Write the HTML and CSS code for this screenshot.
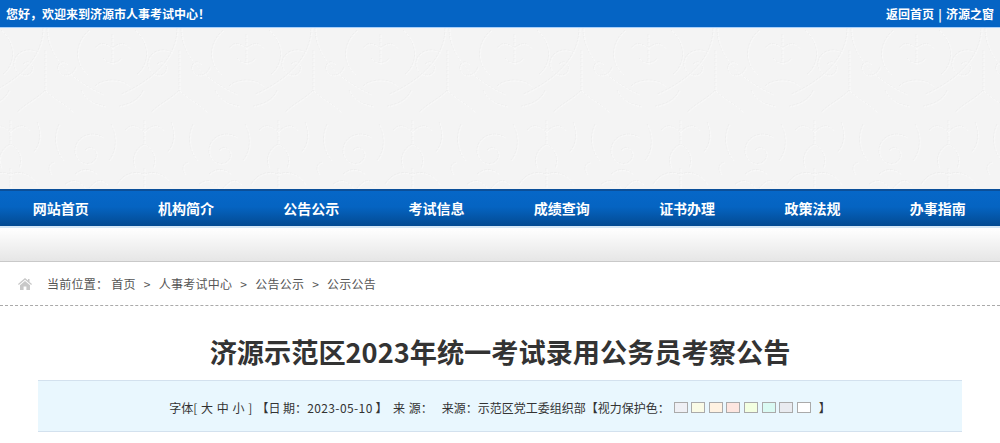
FILE: index.html
```html
<!DOCTYPE html>
<html lang="zh-CN">
<head>
    <meta charset="UTF-8">
    <meta name="viewport" content="width=device-width, initial-scale=1.0">
    <title>济源示范区2023年统一考试录用公务员考察公告</title>
    <link rel="stylesheet" href="styles.css">
</head>
<body>
    <div class="topbar">
        <div class="welcome">您好，欢迎来到济源市人事考试中心！</div>
        <div class="top-links"><a href="#">返回首页</a> | <a href="#">济源之窗</a></div>
    </div>

    <div class="banner">
        <svg class="banner-texture" width="100%" height="100%" aria-hidden="true">
            <defs>
                <g id="damask-lines" fill="none" stroke-width="1" stroke-dasharray="3 1">
                    <!-- upper row: tall arcs meeting at the seam -->
                    <path d="M2 0C2 26 22 50 58 66M132 0C132 26 112 50 76 66"/>
                    <path d="M134 22V62M0 22V62M134 62C124 72 116 74 106 84M0 62C10 72 18 74 28 84"/>
                    <path d="M44 2C30 14 28 34 42 46M90 2C104 14 106 34 92 46"/>
                    <path d="M67 6V36M67 20C60 14 54 14 50 20M67 20C74 14 80 14 84 20M58 30C62 36 72 36 76 30"/>
                    <path d="M112 36c4-5 11-1 9 6c-3 8-16 6-18-4c-2-13 12-20 24-14"/>
                    <path d="M22 36c-4-5-11-1-9 6c3 8 16 6 18-4"/>
                    <path d="M50 58C56 50 78 50 84 58M36 62C40 72 50 76 60 78M98 62C94 72 84 76 74 78"/>
                    <!-- lower row: small repeated damask -->
                    <path d="M99 92V116M99 104C92 96 84 96 80 102M99 104C106 96 114 96 118 102"/>
                    <path d="M99 116C90 120 86 130 90 140M99 116C108 120 112 130 108 140M99 140V160"/>
                    <path d="M99 146C88 142 78 146 72 156M99 146C110 142 120 146 126 156"/>
                    <path d="M40 122c5-6 13-1 11 7c-3 10-19 8-21-4c-2-15 14-24 28-16"/>
                    <path d="M14 96C8 108 10 122 18 132M66 96C72 108 72 122 64 132"/>
                    <path d="M30 146C36 140 46 140 52 146M20 156C28 150 34 152 40 160M62 156C56 150 50 152 44 160"/>
                    <path d="M126 94C130 104 130 116 122 124M6 146C2 140 4 134 10 134"/>
                </g>
                <pattern id="damask" width="134" height="162" patternUnits="userSpaceOnUse" patternTransform="translate(45 0)">
                    <use href="#damask-lines" stroke="#eeeeee"/>
                    <use href="#damask-lines" stroke="#f9f9f9" x="1" y="1"/>
                </pattern>
            </defs>
            <rect width="100%" height="100%" fill="url(#damask)"/>
        </svg>
    </div>

    <nav class="nav">
        <a href="#" class="nav-link">网站首页</a>
        <a href="#" class="nav-link">机构简介</a>
        <a href="#" class="nav-link">公告公示</a>
        <a href="#" class="nav-link">考试信息</a>
        <a href="#" class="nav-link">成绩查询</a>
        <a href="#" class="nav-link">证书办理</a>
        <a href="#" class="nav-link">政策法规</a>
        <a href="#" class="nav-link">办事指南</a>
    </nav>
    <div class="subnav"></div>

    <div class="crumbs">
        <svg class="home-icon" width="14" height="12" viewBox="0 0 14 12" aria-hidden="true">
            <path d="M7 0L0 6l.8 1L7 1.8 13.2 7l.8-1L11.5 3.900V1H10v1.600Z"/>
            <path d="M7 3L2 7.200V12h3.600V8.500h2.800V12H12V7.200Z"/>
        </svg>
        <span class="crumb-label">当前位置：</span>
        <a href="#">首页</a>
        <span class="crumb-sep">&gt;</span>
        <a href="#">人事考试中心</a>
        <span class="crumb-sep">&gt;</span>
        <a href="#">公告公示</a>
        <span class="crumb-sep">&gt;</span>
        <a href="#">公示公告</a>
    </div>

    <main class="article">
        <h1>济源示范区2023年统一考试录用公务员考察公告</h1>
        <div class="meta">
            <span class="meta-font">字体[ 大 中 小 ]</span>
            <span class="meta-date">【日 期：<span class="meta-num">2023-05-10</span> 】</span>
            <span class="meta-source">来 源：</span>
            <span class="meta-origin">来源：示范区党工委组织部</span>
            <span class="meta-eye">【视力保护色：</span>
            <span class="swatches">
                <i class="swatch c1"></i>
                <i class="swatch c2"></i>
                <i class="swatch c3"></i>
                <i class="swatch c4"></i>
                <i class="swatch c5"></i>
                <i class="swatch c6"></i>
                <i class="swatch c7"></i>
                <i class="swatch c8"></i>
            </span>
            <span>】</span>
        </div>
    </main>
</body>
</html>
```

FILE: styles.css
```css
* {
    margin: 0;
    padding: 0;
    box-sizing: border-box;
}

body {
    font-family: "Noto Sans CJK SC", "Liberation Sans", sans-serif;
    font-size: 12px;
    color: #555;
    background: #fff;
    overflow: hidden;
}

a {
    color: inherit;
    text-decoration: none;
}

.topbar {
    height: 27px;
    padding: 0 6px;
    display: flex;
    justify-content: space-between;
    align-items: center;
    background: #0564c4;
    color: #fff;
    font-weight: 700;
    line-height: 27px;
}

.top-links {
    word-spacing: 1.5px;
}

.banner {
    height: 162px;
    border-top: 1px solid #a9d0fb;
    background: #f4f4f4;
}

.banner-texture {
    display: block;
}

.nav {
    height: 37px;
    display: grid;
    grid-template-columns: repeat(8, 125.3px);
    border-top: 2px solid #0b4f99;
    background: linear-gradient(#0667c8 0%, #0564c2 45%, #034a92 100%);
}

.nav-link {
    padding-right: 4px;
    text-align: center;
    color: #fff;
    font-size: 14px;
    font-weight: 700;
    line-height: 35px;
}

.subnav {
    height: 36px;
    border-top: 2px solid #d4e7f7;
    border-bottom: 1px solid #c9c9c9;
    background: linear-gradient(#fff, #e6e6e6);
}

.crumbs {
    height: 44px;
    padding-left: 18px;
    display: flex;
    align-items: center;
    letter-spacing: 0.25px;
    border-bottom: 1px dashed #aaa;
}

.home-icon {
    fill: #c8c8c8;
    margin-right: 15px;
}

.crumb-label {
    margin-right: 3px;
}

.crumb-sep {
    margin: 0 8px;
}

.article h1 {
    margin-top: 27px;
    text-align: center;
    font-size: 27.2px;
    line-height: 36px;
    font-weight: 700;
    color: #333;
}

.meta {
    height: 52px;
    margin: 11px 38px 0;
    padding-top: 2px;
    display: flex;
    justify-content: center;
    align-items: center;
    border-top: 1px solid #d3e1ee;
    border-bottom: 1px solid #d3e1ee;
    background: #e9f7fe;
    color: #333;
}

.meta-font {
    word-spacing: 1.1px;
}

.meta-date {
    margin-left: 4px;
}

.meta-num {
    letter-spacing: 0.4px;
}

.meta-source {
    margin-left: 5.5px;
    word-spacing: 1px;
}

.meta-origin {
    margin-left: 9px;
}

.swatches {
    display: flex;
    gap: 3.6px;
    margin: 0 8px 0 4px;
}

.swatch {
    width: 14px;
    height: 11px;
    border: 1px solid #aaa;
}

.c1 { background: #eff0f5; }
.c2 { background: #fafbe6; }
.c3 { background: #fff2e2; }
.c4 { background: #fde6e0; }
.c5 { background: #f3ffe1; }
.c6 { background: #dafaf3; }
.c7 { background: #e9ebf0; }
.c8 { background: #fff; }
```
